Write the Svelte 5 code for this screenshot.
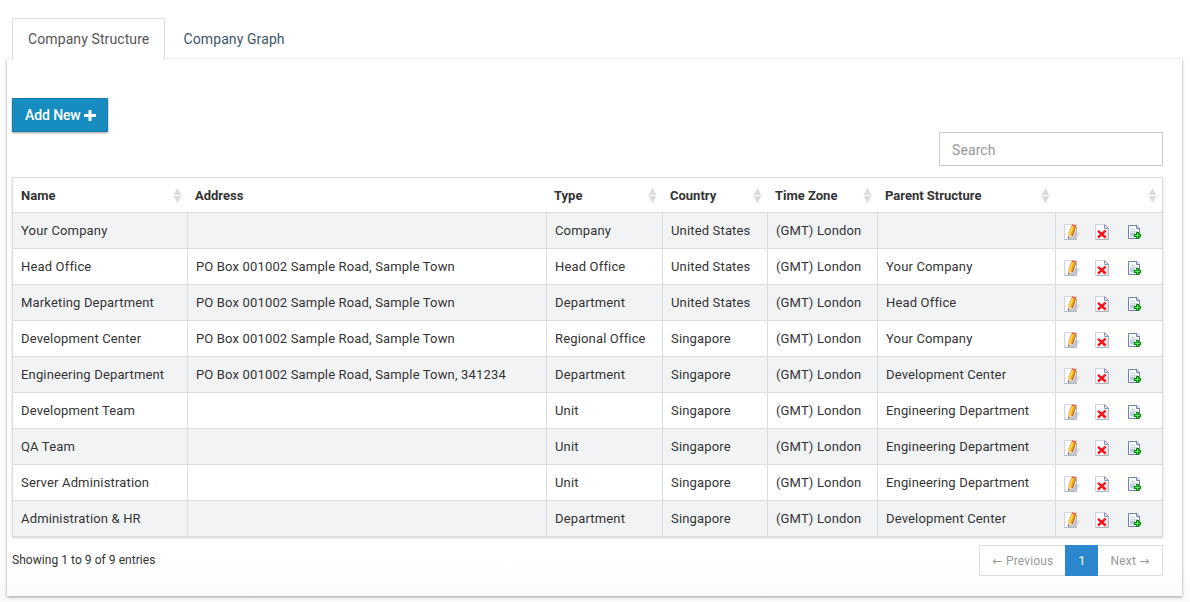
<script>
  const columns = ['Name', 'Address', 'Type', 'Country', 'Time Zone', 'Parent Structure', ''];
  const road = 'PO Box 001002 Sample Road, Sample Town';
  const tz = '(GMT) London';
  const rows = [
    ['Your Company', '', 'Company', 'United States', tz, ''],
    ['Head Office', road, 'Head Office', 'United States', tz, 'Your Company'],
    ['Marketing Department', road, 'Department', 'United States', tz, 'Head Office'],
    ['Development Center', road, 'Regional Office', 'Singapore', tz, 'Your Company'],
    ['Engineering Department', road + ', 341234', 'Department', 'Singapore', tz, 'Development Center'],
    ['Development Team', '', 'Unit', 'Singapore', tz, 'Engineering Department'],
    ['QA Team', '', 'Unit', 'Singapore', tz, 'Engineering Department'],
    ['Server Administration', '', 'Unit', 'Singapore', tz, 'Engineering Department'],
    ['Administration & HR', '', 'Department', 'Singapore', tz, 'Development Center']
  ];
</script>

<main>
  <nav class="tabs">
    <a class="tab active">Company Structure</a>
    <a class="tab">Company Graph</a>
  </nav>
  <section class="panel">
    <button class="add">Add New
      <svg width="12" height="11" viewBox="0 0 12 11"><path d="M4.500.6q0-.6.6-.6h1.800q.6 0 .6.6V4H11.400q.6 0 .6.6v1.800q0 .6-.6.6H7.500v3.400q0 .6-.6.6H5.100q-.6 0-.6-.6V7H.6Q0 7 0 6.400V4.600Q0 4 .6 4h3.900z" fill="#fff" /></svg>
    </button>
    <div class="filter"><input placeholder="Search" /></div>
    <div class="table">
      <div class="row head">
        {#each columns as name}
          <div class="th">
            <span>{name}</span>
            {#if name !== 'Address'}
              <svg class="sort" width="9" height="15" viewBox="0 0 9 15"><path d="M4.500 0L8.500 7H.5zM.5 8h8L4.500 15z" fill="#dcdcdc" /></svg>
            {/if}
          </div>
        {/each}
      </div>
      {#each rows as row}
        <div class="row body">
          {#each row as cell}
            <div class="td">{cell}</div>
          {/each}
          <div class="td actions">
            <svg width="16" height="16" viewBox="0 0 16 16">
              <path d="M.5.500h12v15H.5z" fill="#fbfcfe" stroke="#d3d5da" />
              <path d="M.5 15.500h12V3" fill="none" stroke="#b4b8c2" />
              <path d="M4 14.500L10 7l2 1v7H4z" fill="#c3c7d2" />
              <path d="M13 8.500l1.500-.5 1.500 2-1.500 2-1.500-.5z" fill="#dfe0e3" />
              <path d="M4 10.500L7.500 1.500l4.500 1.700L8.500 12.300z" fill="#f9a21b" />
              <path d="M4.800 10.500L8.200 2l1.500.5-3.400 8.600z" fill="#ffd94e" />
              <path d="M8.200 12L11.600 3.200" stroke="#c9661a" stroke-width="1" />
              <path d="M7.500 1.700L8.200.2l4.200 1.300-.5 1.900z" fill="#e86a35" />
              <path d="M4 10.500l4.500 1.800-4.500 2.500z" fill="#f0cf9f" />
              <path d="M4 12.800l1.300.8-1.400 1.200z" fill="#333" />
            </svg>
            <svg width="16" height="16" viewBox="0 0 16 16">
              <path d="M.5.5h9l4 4v11H.5z" fill="#fcfcfe" stroke="#d2d4da" />
              <path d="M13.500 5v10.500H.5" fill="none" stroke="#b0b4be" />
              <path d="M9.500.5v4h4z" fill="#e4e7ee" stroke="#8f96a6" />
              <path d="M8 8h5v7H8z" fill="#dee1e9" />
              <path d="M3 6.800l7.600 6.700M10.600 6.500L3 13.700" stroke="#f41212" stroke-width="2.400" />
            </svg>
            <svg width="16" height="16" viewBox="0 0 16 16">
              <path d="M.5 1.500h8.300l2.700 2.700v10.300H.5z" fill="#fafbfe" stroke="#6f83ad" />
              <path d="M8.500 1.500v3h3" fill="#dde5f4" stroke="#6f83ad" />
              <path d="M2 5.500h5M2 7.500h8" stroke="#cbd2e0" />
              <path d="M2 8.500h5v4H2z" fill="#bcc8df" />
              <path d="M8.500 8.500h2v2h2v2h-2v2h-2v-2h-2v-2h2z" fill="#5ff04f" stroke="#0d8a12" stroke-width="1.200" />
            </svg>
          </div>
        </div>
      {/each}
    </div>
    <footer>
      <div class="info">Showing 1 to 9 of 9 entries</div>
      <div class="pager">
        <a class="page"><span class="arrow">←</span> Previous</a><a class="page current">1</a><a class="page">Next <span class="arrow">→</span></a>
      </div>
    </footer>
  </section>
</main>

<style>
  :global(body) { background: #fff; }
  main {
    box-sizing: border-box;
    height: 602px;
    padding: 18px 8px 0 7px;
    font: 13px/20px Roboto, sans-serif;
    letter-spacing: 0.16px;
    color: #333;
    background: linear-gradient(#fff 570px, #fafafa 602px);
  }
  .tabs { display: flex; padding-left: 5px; height: 41px; }
  .tab {
    box-sizing: border-box;
    height: 41px;
    padding: 10px 15px 0;
    border: 1px solid transparent;
    border-bottom: 0;
    font-size: 14px;
    letter-spacing: 0.1px;
    white-space: nowrap;
    color: #3c5668;
    margin-right: 2.500px;
  }
  .active { width: 153px; border-color: #ddd; color: #555; background: #fff; }
  .panel {
    box-sizing: border-box;
    width: 1175px;
    height: 537px;
    padding: 39px 19px 0 5px;
    background: linear-gradient(#fff 500px, #fbfbfb);
    box-shadow: 0 1px 3px rgba(0, 0, 0, 0.4);
  }
  .add {
    display: flex;
    align-items: center;
    gap: 3px;
    box-sizing: border-box;
    width: 96px;
    height: 34px;
    padding: 0 0 0 12px;
    border: 1px solid #1b7fae;
    background: #168cc0;
    color: #fff;
    font: 500 14px/20px Roboto, sans-serif;
    letter-spacing: -0.1px;
    box-shadow: 0 1px 2px rgba(0, 0, 0, 0.4);
  }
  .filter { display: flex; justify-content: flex-end; }
  input {
    box-sizing: border-box;
    width: 224px;
    height: 34px;
    padding: 2px 12px 0;
    border: 1px solid #ccc;
    font: 14px Roboto, sans-serif;
    letter-spacing: 0.1px;
  }
  input::placeholder { color: #999; }
  .table {
    box-sizing: border-box;
    width: 1151px;
    margin-top: 11px;
    border: 1px solid #ddd;
    box-shadow: 0 1px 2px rgba(0, 0, 0, 0.2);
  }
  .row { display: grid; grid-template-columns: 175px 359px 116px 105px 110px 178px 106px; }
  .th {
    display: flex;
    justify-content: space-between;
    align-items: center;
    height: 34px;
    padding: 0 6px 0 7px;
    font-weight: 700;
    letter-spacing: 0;
  }
  .th span { padding-top: 2px; }
  .th:first-child { padding-left: 8px; }
  .th:last-child { padding-right: 5px; }
  .body { height: 36px; box-sizing: border-box; border-top: 1px solid #ddd; }
  .body:nth-child(even) { background: #f2f3f5; }
  .body:nth-child(odd) { background: #fff; }
  .td { padding: 8px 8px 0; line-height: 20px; border-right: 1px solid #ddd; white-space: nowrap; }
  .actions { display: grid; grid-template-columns: 31px 33px 16px; padding: 11px 0 0 8px; border-right: 0; }
  footer { display: flex; justify-content: space-between; padding-top: 8px; }
  .info { font-size: 12px; padding-top: 5px; letter-spacing: 0.05px; }
  .pager { display: flex; font-size: 12px; height: 31px; }
  .page {
    box-sizing: border-box;
    width: 87px;
    padding-top: 5px;
    text-align: center;
    color: #999;
    border: 1px solid #ddd;
    border-right: 0;
    background: #fff;
    white-space: nowrap;
  }
  .arrow { font-family: "DejaVu Sans", sans-serif; font-size: 12px; line-height: 1; }
  .page:last-child { width: 65px; border-right: 1px solid #ddd; border-left: 0; }
  .current { width: 33px; margin-left: -1px; color: #fff; background: #2d87ce; border-color: #2d87ce; }
</style>
